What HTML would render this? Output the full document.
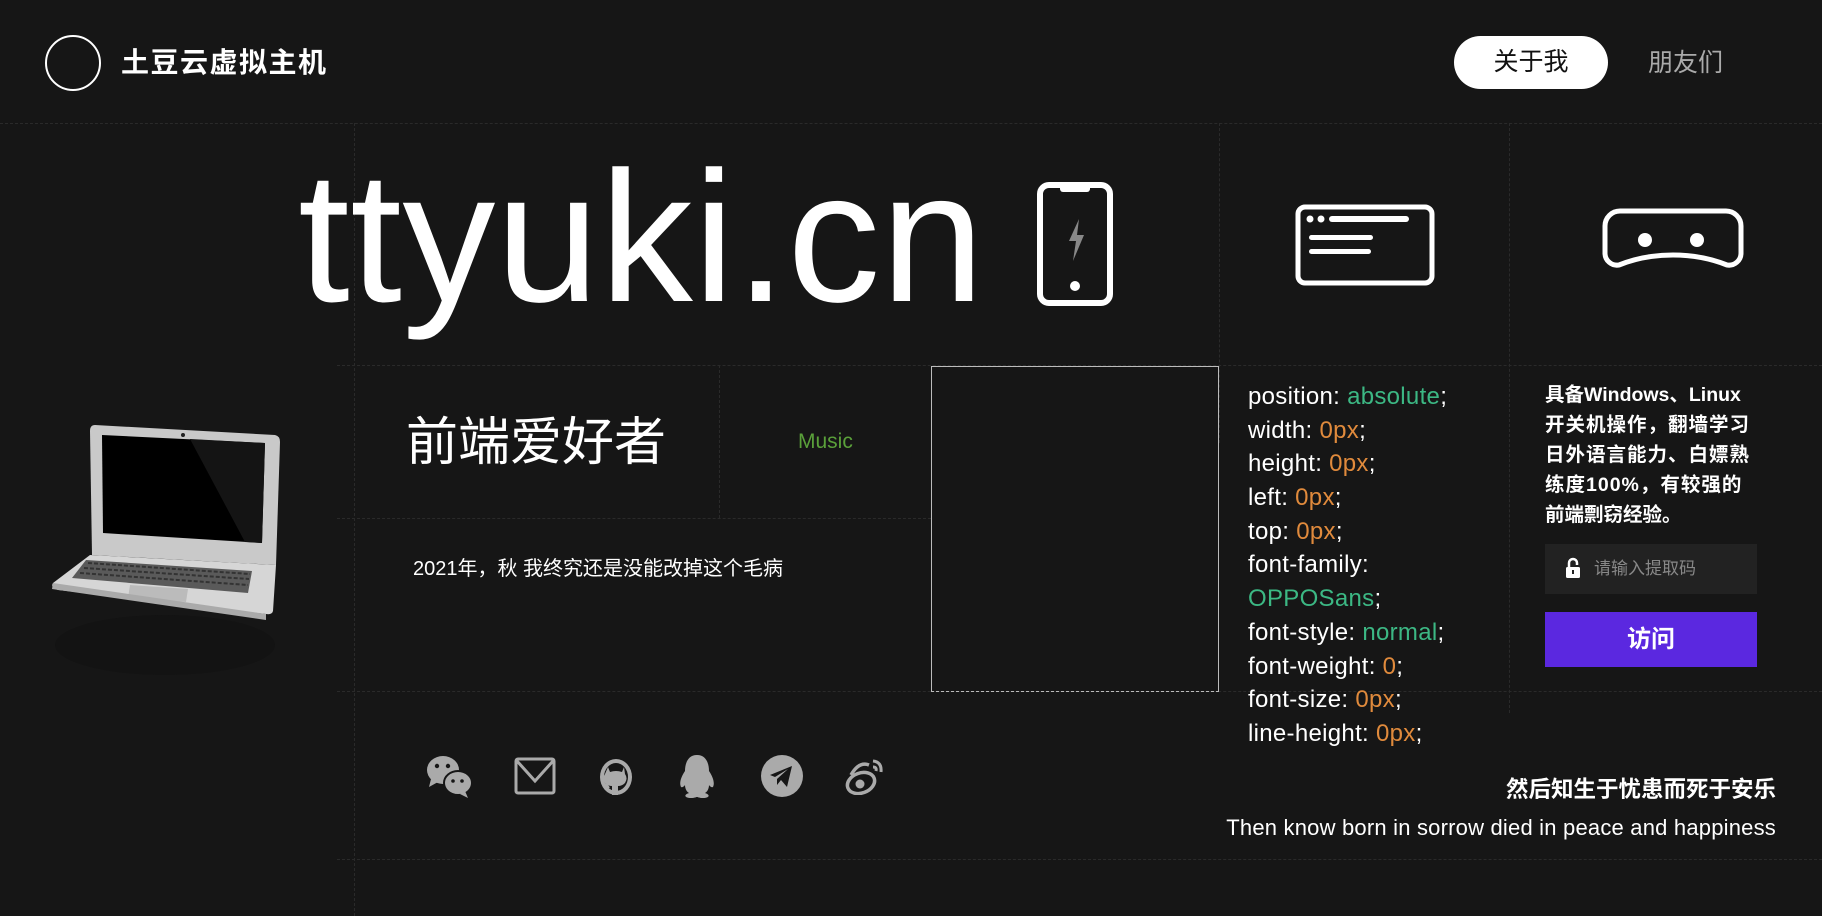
<!DOCTYPE html>
<html><head><meta charset="utf-8"><style>
*{margin:0;padding:0;box-sizing:border-box}
body{width:1822px;height:916px;background:#161616;position:relative;overflow:hidden;font-family:"Liberation Sans","Noto Sans CJK SC",sans-serif;color:#fff}
.a{position:absolute}
.h{position:absolute;height:0;border-top:1px dashed #2a2a2a}
.v{position:absolute;width:0;border-left:1px dashed #2a2a2a}
.css div{height:33.7px;line-height:33.7px;font-size:24px;white-space:nowrap;letter-spacing:0.3px}
.g{color:#3cb884}.o{color:#e08a3c}
.rp div{height:29.9px;line-height:29.9px;white-space:nowrap}
</style></head><body>
<!-- grid -->
<div class="h" style="left:0;top:123px;width:1822px"></div>
<div class="h" style="left:337px;top:365px;width:1485px"></div>
<div class="h" style="left:337px;top:518px;width:594px"></div>
<div class="h" style="left:337px;top:691px;width:1485px"></div>
<div class="h" style="left:337px;top:859px;width:1485px"></div>
<div class="v" style="left:354px;top:123px;height:793px"></div>
<div class="v" style="left:719px;top:365px;height:153px"></div>
<div class="v" style="left:1219px;top:123px;height:320px"></div>
<div class="v" style="left:1509px;top:123px;height:590px"></div>

<!-- header -->
<div class="a" style="left:45px;top:35px;width:56px;height:56px;border:2px solid #fff;border-radius:50%"></div>
<div class="a" style="left:121px;top:44px;font-size:28px;font-weight:bold;line-height:38px;letter-spacing:1.5px">土豆云虚拟主机</div>
<div class="a" style="left:1454px;top:36px;width:154px;height:53px;background:#fff;border-radius:27px;color:#111;font-size:25px;text-align:center;line-height:53px">关于我</div>
<div class="a" style="left:1648px;top:44px;font-size:25px;line-height:38px;color:#aaa">朋友们</div>

<!-- big title -->
<div class="a" style="left:298px;top:128px;font-size:186px;line-height:220px;letter-spacing:0.5px">ttyuki.cn</div>

<!-- phone -->
<svg class="a" style="left:1036px;top:181px" width="78" height="126" viewBox="0 0 78 126"><rect x="4" y="4" width="70" height="118" rx="9" fill="none" stroke="#fff" stroke-width="6"/><path d="M24 4 h30 v4 a3 3 0 0 1 -3 3 h-24 a3 3 0 0 1 -3 -3z" fill="#fff"/><path d="M43 38 L33 60 h7 l-3 20 l11 -26 h-7 z" fill="#888"/><circle cx="39" cy="105" r="5" fill="#fff"/></svg>
<!-- browser -->
<svg class="a" style="left:1295px;top:204px" width="140" height="82" viewBox="0 0 140 82"><rect x="3" y="3" width="134" height="76" rx="7" fill="none" stroke="#fff" stroke-width="5"/><circle cx="15" cy="15" r="3.5" fill="#fff"/><circle cx="26" cy="15" r="3.5" fill="#fff"/><rect x="34" y="12" width="80" height="6" rx="3" fill="#fff"/><rect x="14" y="31" width="64" height="5" rx="2.5" fill="#fff"/><rect x="14" y="45" width="62" height="5" rx="2.5" fill="#fff"/></svg>
<!-- VR -->
<svg class="a" style="left:1602px;top:207px" width="142" height="70" viewBox="0 0 142 70"><path d="M18 4 H124 A15 15 0 0 1 139 19 V46 A12 12 0 0 1 125 58 Q100 48 71 48 Q42 48 17 58 A12 12 0 0 1 3 46 V19 A15 15 0 0 1 18 4Z" fill="none" stroke="#fff" stroke-width="5"/><circle cx="43" cy="33" r="7" fill="#fff"/><circle cx="95" cy="33" r="7" fill="#fff"/></svg>

<!-- laptop -->
<svg class="a" style="left:40px;top:415px" width="250" height="260" viewBox="0 0 250 260"><ellipse cx="125" cy="230" rx="110" ry="30" fill="#131313"/><path d="M55 10 L235 20 Q240 21 240 27 L236 150 L52 140 L50 16 Q50 10 55 10Z" fill="#c9c9c9"/><path d="M62 20 L225 28 L222 128 L63 118Z" fill="#000"/><path d="M150 24 L225 28 L222 128 L205 127Z" fill="#141414"/><circle cx="143" cy="20" r="2" fill="#222"/><path d="M50 140 L236 150 L233 196 Q232 200 226 199 L18 175 Q10 173 13 168Z" fill="#d6d6d6"/><path d="M46 145 L212 156 L208 178 L32 163Z" fill="#5a5a5a"/><path d="M48 148 L210 159" stroke="#333" stroke-width="2" stroke-dasharray="4 2"/><path d="M44 153 L209 164" stroke="#333" stroke-width="2" stroke-dasharray="4 2"/><path d="M40 158 L208 170" stroke="#333" stroke-width="2" stroke-dasharray="4 2"/><path d="M90 170 L148 174 L146 187 L88 183Z" fill="#bbb"/><path d="M13 168 L226 199 L226 205 L12 174Z" fill="#aaa"/></svg>

<!-- middle -->
<div class="a" style="left:406px;top:410px;font-size:52px;line-height:66px">前端爱好者</div>
<div class="a" style="left:798px;top:429px;font-size:21px;line-height:26px;color:#5aa03a">Music</div>
<div class="a" style="left:413px;top:556px;font-size:20px;line-height:26px">2021年，秋 我终究还是没能改掉这个毛病</div>
<div class="a" style="left:931px;top:366px;width:288px;height:326px;border:1px solid #bbb;border-bottom-style:dashed"></div>

<!-- css block -->
<div class="a css" style="left:1248px;top:380px">
<div>position: <span class="g">absolute</span>;</div>
<div>width: <span class="o">0px</span>;</div>
<div>height: <span class="o">0px</span>;</div>
<div>left: <span class="o">0px</span>;</div>
<div>top: <span class="o">0px</span>;</div>
<div>font-family:</div>
<div><span class="g">OPPOSans</span>;</div>
<div>font-style: <span class="g">normal</span>;</div>
<div>font-weight: <span class="o">0</span>;</div>
<div>font-size: <span class="o">0px</span>;</div>
<div>line-height: <span class="o">0px</span>;</div>
</div>

<!-- right column -->
<div class="a rp" style="left:1545px;top:381px;width:212px;font-size:19.5px;font-weight:bold">
<div>具备Windows、Linux</div>
<div style="letter-spacing:1px">开关机操作，翻墙学习</div>
<div style="letter-spacing:1px">日外语言能力、白嫖熟</div>
<div style="letter-spacing:1px">练度100%，有较强的</div>
<div>前端剽窃经验。</div>
</div>
<div class="a" style="left:1545px;top:544px;width:212px;height:50px;background:#222"></div>
<svg class="a" style="left:1565px;top:557px" width="16" height="22" viewBox="0 0 16 22"><path d="M4 10 V6 a4 4 0 0 1 8 0 V8" fill="none" stroke="#fff" stroke-width="2.5"/><rect x="1" y="10" width="14" height="11" rx="1.5" fill="#fff"/><rect x="7" y="13" width="2" height="4" fill="#222"/></svg>
<div class="a" style="left:1594px;top:558px;font-size:17px;line-height:22px;color:#888">请输入提取码</div>
<div class="a" style="left:1545px;top:612px;width:212px;height:55px;background:#5b28e0;text-align:center;line-height:55px;font-size:24px;font-weight:bold">访问</div>

<!-- social icons -->
<svg class="a" style="left:425px;top:753px" width="48" height="46" viewBox="0 0 48 46"><ellipse cx="18" cy="17" rx="16" ry="14" fill="#aaa"/><path d="M6 26 l-2 8 l9 -5z" fill="#aaa"/><ellipse cx="33" cy="30" rx="14" ry="12" fill="#aaa" stroke="#161616" stroke-width="2"/><path d="M40 38 l3 7 l-8 -4z" fill="#aaa"/><circle cx="12" cy="13" r="2.2" fill="#161616"/><circle cx="23" cy="13" r="2.2" fill="#161616"/><circle cx="28" cy="28" r="1.8" fill="#161616"/><circle cx="37" cy="28" r="1.8" fill="#161616"/></svg>
<svg class="a" style="left:514px;top:757px" width="42" height="38" viewBox="0 0 42 38"><rect x="2" y="2" width="38" height="34" rx="2" fill="none" stroke="#aaa" stroke-width="3"/><path d="M3 4 L21 24 L39 4" fill="none" stroke="#aaa" stroke-width="3"/></svg>
<svg class="a" style="left:598px;top:757px" width="36" height="40" viewBox="0 0 36 40"><ellipse cx="18" cy="20" rx="16" ry="18" fill="#aaa"/><ellipse cx="18" cy="20" rx="12" ry="14" fill="#161616"/><path d="M10 10 l2 5 q6 -2 12 0 l2 -5 l1 7 q3 4 0 9 q-3 3 -7 3 v9 h-6 v-9 q-4 0 -7 -3 q-3 -5 0 -9z" fill="#aaa"/><path d="M5 27 q4 0 6 4" stroke="#aaa" stroke-width="2" fill="none"/></svg>
<svg class="a" style="left:677px;top:753px" width="40" height="46" viewBox="0 0 40 46"><path d="M20 2 C10 2 8 12 8 18 C4 24 2 30 4 34 C6 35 8 32 8 32 C8 36 10 39 12 40 C6 42 8 45 14 45 C18 45 19 44 20 44 C21 44 22 45 26 45 C32 45 34 42 28 40 C30 39 32 36 32 32 C32 32 34 35 36 34 C38 30 36 24 32 18 C32 12 30 2 20 2Z" fill="#aaa"/></svg>
<svg class="a" style="left:760px;top:754px" width="44" height="44" viewBox="0 0 44 44"><circle cx="22" cy="22" r="21" fill="#aaa"/><path d="M10 21 L32 12 L27 33 L21 26 L17 31 L17 25 L28 15 L15 23z" fill="#161616"/></svg>
<svg class="a" style="left:845px;top:757px" width="42" height="38" viewBox="0 0 42 38"><ellipse cx="16" cy="26" rx="14" ry="10" fill="none" stroke="#aaa" stroke-width="3.5" transform="rotate(-20 16 26)"/><circle cx="15" cy="27" r="4.5" fill="#aaa"/><path d="M6 18 Q14 4 24 8" stroke="#aaa" stroke-width="3.5" fill="none"/><path d="M28 4 Q37 5 36 15" stroke="#aaa" stroke-width="3" fill="none"/><path d="M28 10 Q32 10 31 14" stroke="#aaa" stroke-width="3" fill="none"/></svg>

<!-- quote -->
<div class="a" style="right:46px;top:776px;font-size:22.5px;font-weight:bold;line-height:28px">然后知生于忧患而死于安乐</div>
<div class="a" style="right:46px;top:814px;font-size:22px;line-height:28px;letter-spacing:0.2px">Then know born in sorrow died in peace and happiness</div>
</body></html>
